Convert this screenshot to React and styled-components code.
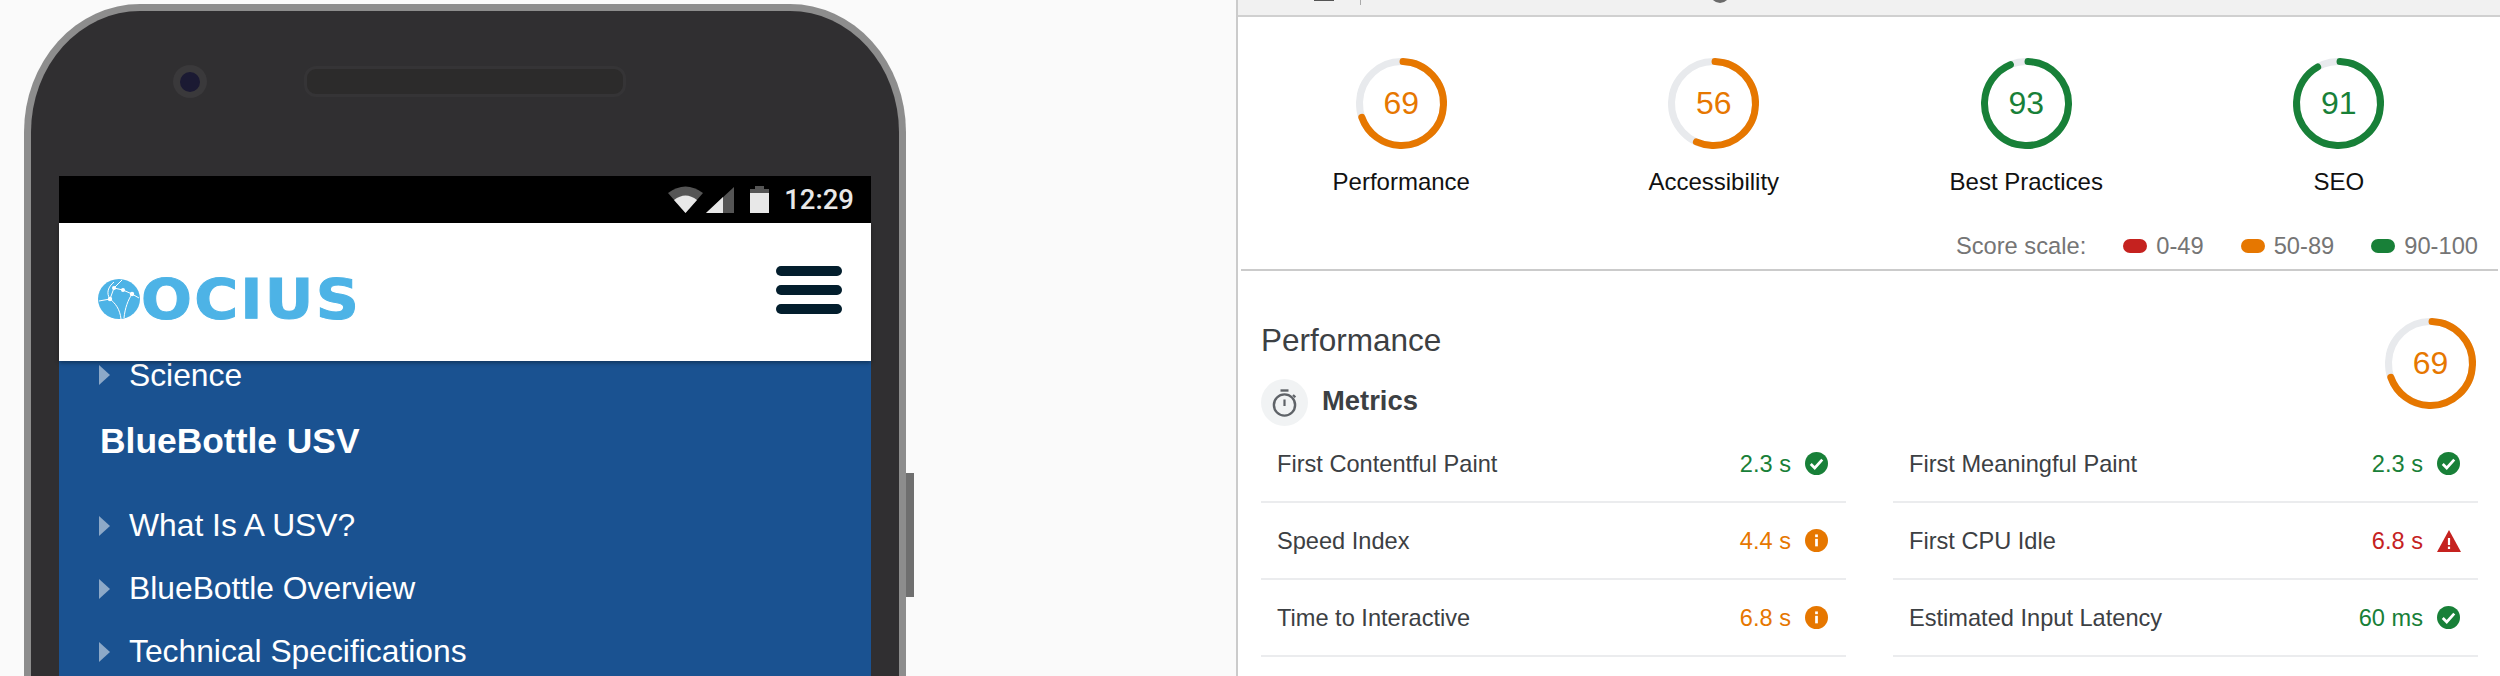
import React from "react";
import styled, { createGlobalStyle } from "styled-components";

const ORANGE = "#e67700";
const GREEN = "#188038";
const RED = "#c5221f";

const GlobalStyle = createGlobalStyle`
	html, body {
		margin: 0;
		padding: 0;
		background: #fafafa;
	}
	body {
		font-family: "Liberation Sans", Arial, sans-serif;
	}
`;

const Page = styled.div`
	display: grid;
	grid-template-columns: 1236px 1264px;
	width: 2500px;
	height: 676px;
	overflow: hidden;
`;

const PhoneArea = styled.div`
	padding: 4px 0 0 24px;
`;

const Phone = styled.div`
	position: relative;
	box-sizing: border-box;
	width: 882px;
	height: 1000px;
	background: #302f31;
	border: 7px solid #8d8d8d;
	border-bottom: 0;
	border-radius: 116px 116px 0 0 / 128px 128px 0 0;
	padding: 0 28px;
`;

const SideButton = styled.div`
	position: absolute;
	left: 875px;
	top: 462px;
	width: 8px;
	height: 124px;
	background: #6f6f6f;
`;

const Bezel = styled.div`
	display: flex;
	align-items: flex-start;
	box-sizing: border-box;
	height: 165px;
	padding: 54px 0 0 114px;
`;

const Camera = styled.div`
	display: flex;
	align-items: center;
	justify-content: center;
	width: 34px;
	height: 33px;
	border-radius: 50%;
	background: #3a393b;
`;

const Lens = styled.div`
	width: 20px;
	height: 20px;
	border-radius: 50%;
	background: #1b1a33;
`;

const Speaker = styled.div`
	box-sizing: border-box;
	width: 322px;
	height: 31px;
	margin: 1px 0 0 97px;
	border: 3px solid #353436;
	border-radius: 12px;
	background: #2c2b2b;
`;

const Screen = styled.div`
	width: 812px;
`;

const StatusBar = styled.div`
	display: flex;
	align-items: center;
	justify-content: flex-end;
	box-sizing: border-box;
	height: 47px;
	padding-right: 17px;
	background: #000;
`;

const StatusTime = styled.span`
	margin-left: 15px;
	font-family: Roboto, sans-serif;
	font-size: 27.5px;
	font-weight: 500;
	color: #e8e8e8;
`;

const SiteHeader = styled.div`
	position: relative;
	z-index: 1;
	display: flex;
	justify-content: space-between;
	box-sizing: border-box;
	height: 138px;
	padding: 43px 29px 0 39px;
	background: #fff;
	box-shadow: 0 2px 4px rgba(0, 0, 0, 0.35);
`;

const Logo = styled.div`
	display: flex;
	align-items: center;
	height: 40px;
	margin-top: 13px;
	color: #4db3e6;
`;

const LogoText = styled.span`
	margin-left: 1px;
	font-family: "DejaVu Sans", sans-serif;
	font-weight: 700;
	font-size: 55px;
	line-height: 40px;
	letter-spacing: 2px;
	transform: scaleX(1.09);
	transform-origin: left center;
	-webkit-text-stroke: 1px #4db3e6;
`;

const Burger = styled.div`
	display: flex;
	flex-direction: column;
	gap: 9px;
`;

const BurgerBar = styled.div`
	width: 66px;
	height: 10px;
	border-radius: 5px;
	background: #031e2d;
`;

const Menu = styled.div`
	height: 400px;
	background: #1a5291;
	color: #fff;
`;

const MenuRow = styled.div`
	display: flex;
	align-items: center;
	gap: 19px;
	height: ${(p) => p.$height || 63}px;
	line-height: ${(p) => p.$height || 63}px;
	padding-left: 40px;
	font-size: 31.8px;
`;

const Arrow = styled.div`
	width: 0;
	height: 0;
	border-left: 11px solid rgba(255, 255, 255, 0.5);
	border-top: 10px solid transparent;
	border-bottom: 10px solid transparent;
`;

const MenuHeading = styled.div`
	display: flex;
	align-items: center;
	box-sizing: border-box;
	height: 88px;
	margin-top: 17px;
	padding: 0 0 18px 41px;
	font-size: 35.4px;
	font-weight: 700;
`;

const Panel = styled.div`
	border-left: 2px solid #cbcbcb;
	background: #fff;
`;

const TopStrip = styled.div`
	display: flex;
	align-items: flex-start;
	height: 15px;
	overflow: hidden;
	background: #f1f1f1;
	border-bottom: 2px solid #d0d0d0;
`;

const StripBar = styled.div`
	width: 20px;
	height: 1px;
	margin-left: 76px;
	background: #555;
`;

const StripSeparator = styled.div`
	width: 1px;
	height: 5px;
	margin-left: 26px;
	background: #aaa;
`;

const StripDot = styled.div`
	width: 20px;
	height: 20px;
	margin: -17px 0 0 349px;
	border-radius: 50%;
	background: #6b6b6b;
`;

const Gauges = styled.div`
	display: grid;
	grid-template-columns: repeat(4, 1fr);
	margin: 0 5px 0 7px;
	padding-top: 41px;
`;

const GaugeItem = styled.div`
	display: flex;
	flex-direction: column;
	align-items: center;
`;

const GaugeBox = styled.div`
	position: relative;
	width: 91px;
	height: 91px;
	color: ${(p) => p.$color};
`;

const GaugeSvg = styled.svg`
	display: block;
	transform: rotate(-87.9deg);
`;

const GaugeValue = styled.span`
	position: absolute;
	inset: 0;
	display: flex;
	align-items: center;
	justify-content: center;
	font-size: 32px;
`;

const GaugeLabel = styled.div`
	margin-top: 18px;
	font-size: 24px;
	line-height: 30px;
	color: #111;
`;

const Legend = styled.div`
	display: flex;
	align-items: center;
	justify-content: flex-end;
	height: 30px;
	margin: 34px 22px 0 0;
	font-size: 23.7px;
	color: #757575;
`;

const LegendItem = styled.div`
	display: flex;
	align-items: center;
	gap: 9px;
	margin-left: 37px;
`;

const Pill = styled.div`
	width: 24px;
	height: 14px;
	border-radius: 7px;
	background: ${(p) => p.$color};
`;

const Divider = styled.div`
	height: 2px;
	margin: 8px 2px 0 3px;
	background: #cbcbcb;
`;

const Section = styled.div`
	padding: 47px 22px 0 23px;
`;

const SectionHead = styled.div`
	display: flex;
	justify-content: space-between;
	height: 108px;
	padding-right: 2px;
`;

const SectionTitle = styled.div`
	height: 40px;
	margin-top: 2px;
	font-size: 31.5px;
	line-height: 40px;
	color: #3c4043;
`;

const GroupHead = styled.div`
	display: flex;
	align-items: center;
	gap: 14px;
	margin-top: 19px;
`;

const GroupBadge = styled.div`
	display: flex;
	align-items: center;
	justify-content: center;
	width: 47px;
	height: 47px;
	border-radius: 50%;
	background: #f1f3f4;
`;

const GroupTitle = styled.div`
	padding-bottom: 3px;
	font-size: 27.4px;
	font-weight: 700;
	color: #3c4043;
`;

const MetricGrid = styled.div`
	display: grid;
	grid-template-columns: 1fr 1fr;
	column-gap: 47px;
`;

const MetricRow = styled.div`
	display: flex;
	align-items: center;
	box-sizing: border-box;
	height: 77px;
	padding: 0 18px 0 16px;
	border-bottom: 2px solid #ebecee;
	font-size: 23.6px;
	color: #3c4043;
`;

const MetricName = styled.span`
	flex: 1;
	padding-top: 2px;
`;

const MetricValue = styled.span`
	margin-right: 14px;
	padding-top: 2px;
	color: ${(p) => p.$color};
`;

function Gauge({ score, size = 91 }) {
	const color = score >= 90 ? GREEN : ORANGE;
	const len = 2 * Math.PI * 42;
	return (
		<GaugeBox $color={color}>
			<GaugeSvg width={size} height={size} viewBox="0 0 91 91">
				<circle cx="45.5" cy="45.5" r="42" fill="none" stroke="#e8eaed" strokeWidth="7" />
				<circle
					cx="45.5"
					cy="45.5"
					r="42"
					fill="none"
					stroke={color}
					strokeWidth="7"
					strokeLinecap="round"
					strokeDasharray={`${(score / 100) * len} ${len}`}
				/>
			</GaugeSvg>
			<GaugeValue>{score}</GaugeValue>
		</GaugeBox>
	);
}

function PassIcon() {
	return (
		<svg width="23" height="23" viewBox="0 0 22 22">
			<circle cx="11" cy="11" r="11" fill={GREEN} />
			<path d="M5.5 11.5l3.8 3.8 7.2-8" fill="none" stroke="#fff" strokeWidth="2.6" />
		</svg>
	);
}

function InfoIcon() {
	return (
		<svg width="23" height="23" viewBox="0 0 22 22">
			<circle cx="11" cy="11" r="11" fill={ORANGE} />
			<rect x="9.7" y="5.2" width="2.6" height="2.6" fill="#fff" />
			<rect x="9.7" y="9.4" width="2.6" height="7.2" fill="#fff" />
		</svg>
	);
}

function FailIcon() {
	return (
		<svg width="24" height="22" viewBox="0 0 24 22" style={{ marginRight: -1 }}>
			<path d="M12 0L24 22H0z" fill={RED} />
			<rect x="10.9" y="8" width="2.2" height="7" fill="#fff" />
			<rect x="10.9" y="16.6" width="2.2" height="2.4" fill="#fff" />
		</svg>
	);
}

function Stopwatch() {
	return (
		<svg width="26" height="28" viewBox="0 0 26 28" fill="none" stroke="#5f6368">
			<path d="M8.5 1.5h8" strokeWidth="2.4" />
			<circle cx="12.5" cy="16" r="10.6" strokeWidth="2.4" />
			<path d="M12.5 10.5v6.5" strokeWidth="2.2" />
			<path d="M21 6l2.4 2.2" strokeWidth="2.2" />
		</svg>
	);
}

function Globe() {
	return (
		<svg width="42" height="40" viewBox="0 0 42 40">
			<ellipse cx="21" cy="20" rx="21" ry="20" fill="#4db3e6" />
			<g fill="none" stroke="#fff" strokeWidth="1">
				<path d="M1 22l11-2 4-11 9 2 9 4 7 4" />
				<path d="M12 20c5 4 10 10 11 20" />
				<path d="M34 15c-4 6-7 14-8 24" />
				<path d="M16 9L24 1" />
				<path d="M12 20C8 14 10 8 16 3" />
			</g>
			<g fill="#fff">
				<circle cx="16" cy="9" r="2" />
				<circle cx="25" cy="11" r="2" />
				<circle cx="34" cy="15" r="2.2" />
				<circle cx="12" cy="20" r="2.2" />
			</g>
		</svg>
	);
}

function StatusIcons() {
	return (
		<>
			<svg width="35" height="27" viewBox="0 0 35 27">
				<path d="M17.5 27L0 7Q17.5 -6 35 7z" fill="#555" />
				<path d="M17.5 27L6 14Q17.5 5 29 14z" fill="#e8e8e8" />
			</svg>
			<svg width="28" height="26" viewBox="0 0 28 26" style={{ marginLeft: 3 }}>
				<path d="M0 26L28 0v26z" fill="#555" />
				<path d="M0 26L17 10v16z" fill="#e8e8e8" />
			</svg>
			<svg width="19" height="27" viewBox="0 0 19 27" style={{ marginLeft: 16 }}>
				<path d="M5 0h9v3h5v5H0V3h5z" fill="#555" />
				<rect y="7" width="19" height="20" fill="#e8e8e8" />
			</svg>
		</>
	);
}

const scores = [
	{ score: 69, label: "Performance" },
	{ score: 56, label: "Accessibility" },
	{ score: 93, label: "Best Practices" },
	{ score: 91, label: "SEO" },
];

const scale = [
	{ color: RED, text: "0-49" },
	{ color: ORANGE, text: "50-89" },
	{ color: GREEN, text: "90-100" },
];

const metrics = [
	{ name: "First Contentful Paint", value: "2.3 s", color: GREEN, Icon: PassIcon },
	{ name: "First Meaningful Paint", value: "2.3 s", color: GREEN, Icon: PassIcon },
	{ name: "Speed Index", value: "4.4 s", color: ORANGE, Icon: InfoIcon },
	{ name: "First CPU Idle", value: "6.8 s", color: RED, Icon: FailIcon },
	{ name: "Time to Interactive", value: "6.8 s", color: ORANGE, Icon: InfoIcon },
	{ name: "Estimated Input Latency", value: "60 ms", color: GREEN, Icon: PassIcon },
];

const menuItems = ["What Is A USV?", "BlueBottle Overview", "Technical Specifications"];

export default function App() {
	return (
		<Page>
			<GlobalStyle />
			<PhoneArea>
				<Phone>
					<SideButton />
					<Bezel>
						<Camera>
							<Lens />
						</Camera>
						<Speaker />
					</Bezel>
					<Screen>
						<StatusBar>
							<StatusIcons />
							<StatusTime>12:29</StatusTime>
						</StatusBar>
						<SiteHeader>
							<Logo>
								<Globe />
								<LogoText>OCIUS</LogoText>
							</Logo>
							<Burger>
								<BurgerBar />
								<BurgerBar />
								<BurgerBar />
							</Burger>
						</SiteHeader>
						<Menu>
							<MenuRow $height={28}>
								<Arrow />
								Science
							</MenuRow>
							<MenuHeading>BlueBottle USV</MenuHeading>
							{menuItems.map((item) => (
								<MenuRow key={item}>
									<Arrow />
									{item}
								</MenuRow>
							))}
						</Menu>
					</Screen>
				</Phone>
			</PhoneArea>
			<Panel>
				<TopStrip>
					<StripBar />
					<StripSeparator />
					<StripDot />
				</TopStrip>
				<Gauges>
					{scores.map((s) => (
						<GaugeItem key={s.label}>
							<Gauge score={s.score} />
							<GaugeLabel>{s.label}</GaugeLabel>
						</GaugeItem>
					))}
				</Gauges>
				<Legend>
					Score scale:
					{scale.map((s) => (
						<LegendItem key={s.text}>
							<Pill $color={s.color} />
							{s.text}
						</LegendItem>
					))}
				</Legend>
				<Divider />
				<Section>
					<SectionHead>
						<div>
							<SectionTitle>Performance</SectionTitle>
							<GroupHead>
								<GroupBadge>
									<Stopwatch />
								</GroupBadge>
								<GroupTitle>Metrics</GroupTitle>
							</GroupHead>
						</div>
						<Gauge score={69} />
					</SectionHead>
					<MetricGrid>
						{metrics.map((m) => (
							<MetricRow key={m.name}>
								<MetricName>{m.name}</MetricName>
								<MetricValue $color={m.color}>{m.value}</MetricValue>
								<m.Icon />
							</MetricRow>
						))}
					</MetricGrid>
				</Section>
			</Panel>
		</Page>
	);
}
